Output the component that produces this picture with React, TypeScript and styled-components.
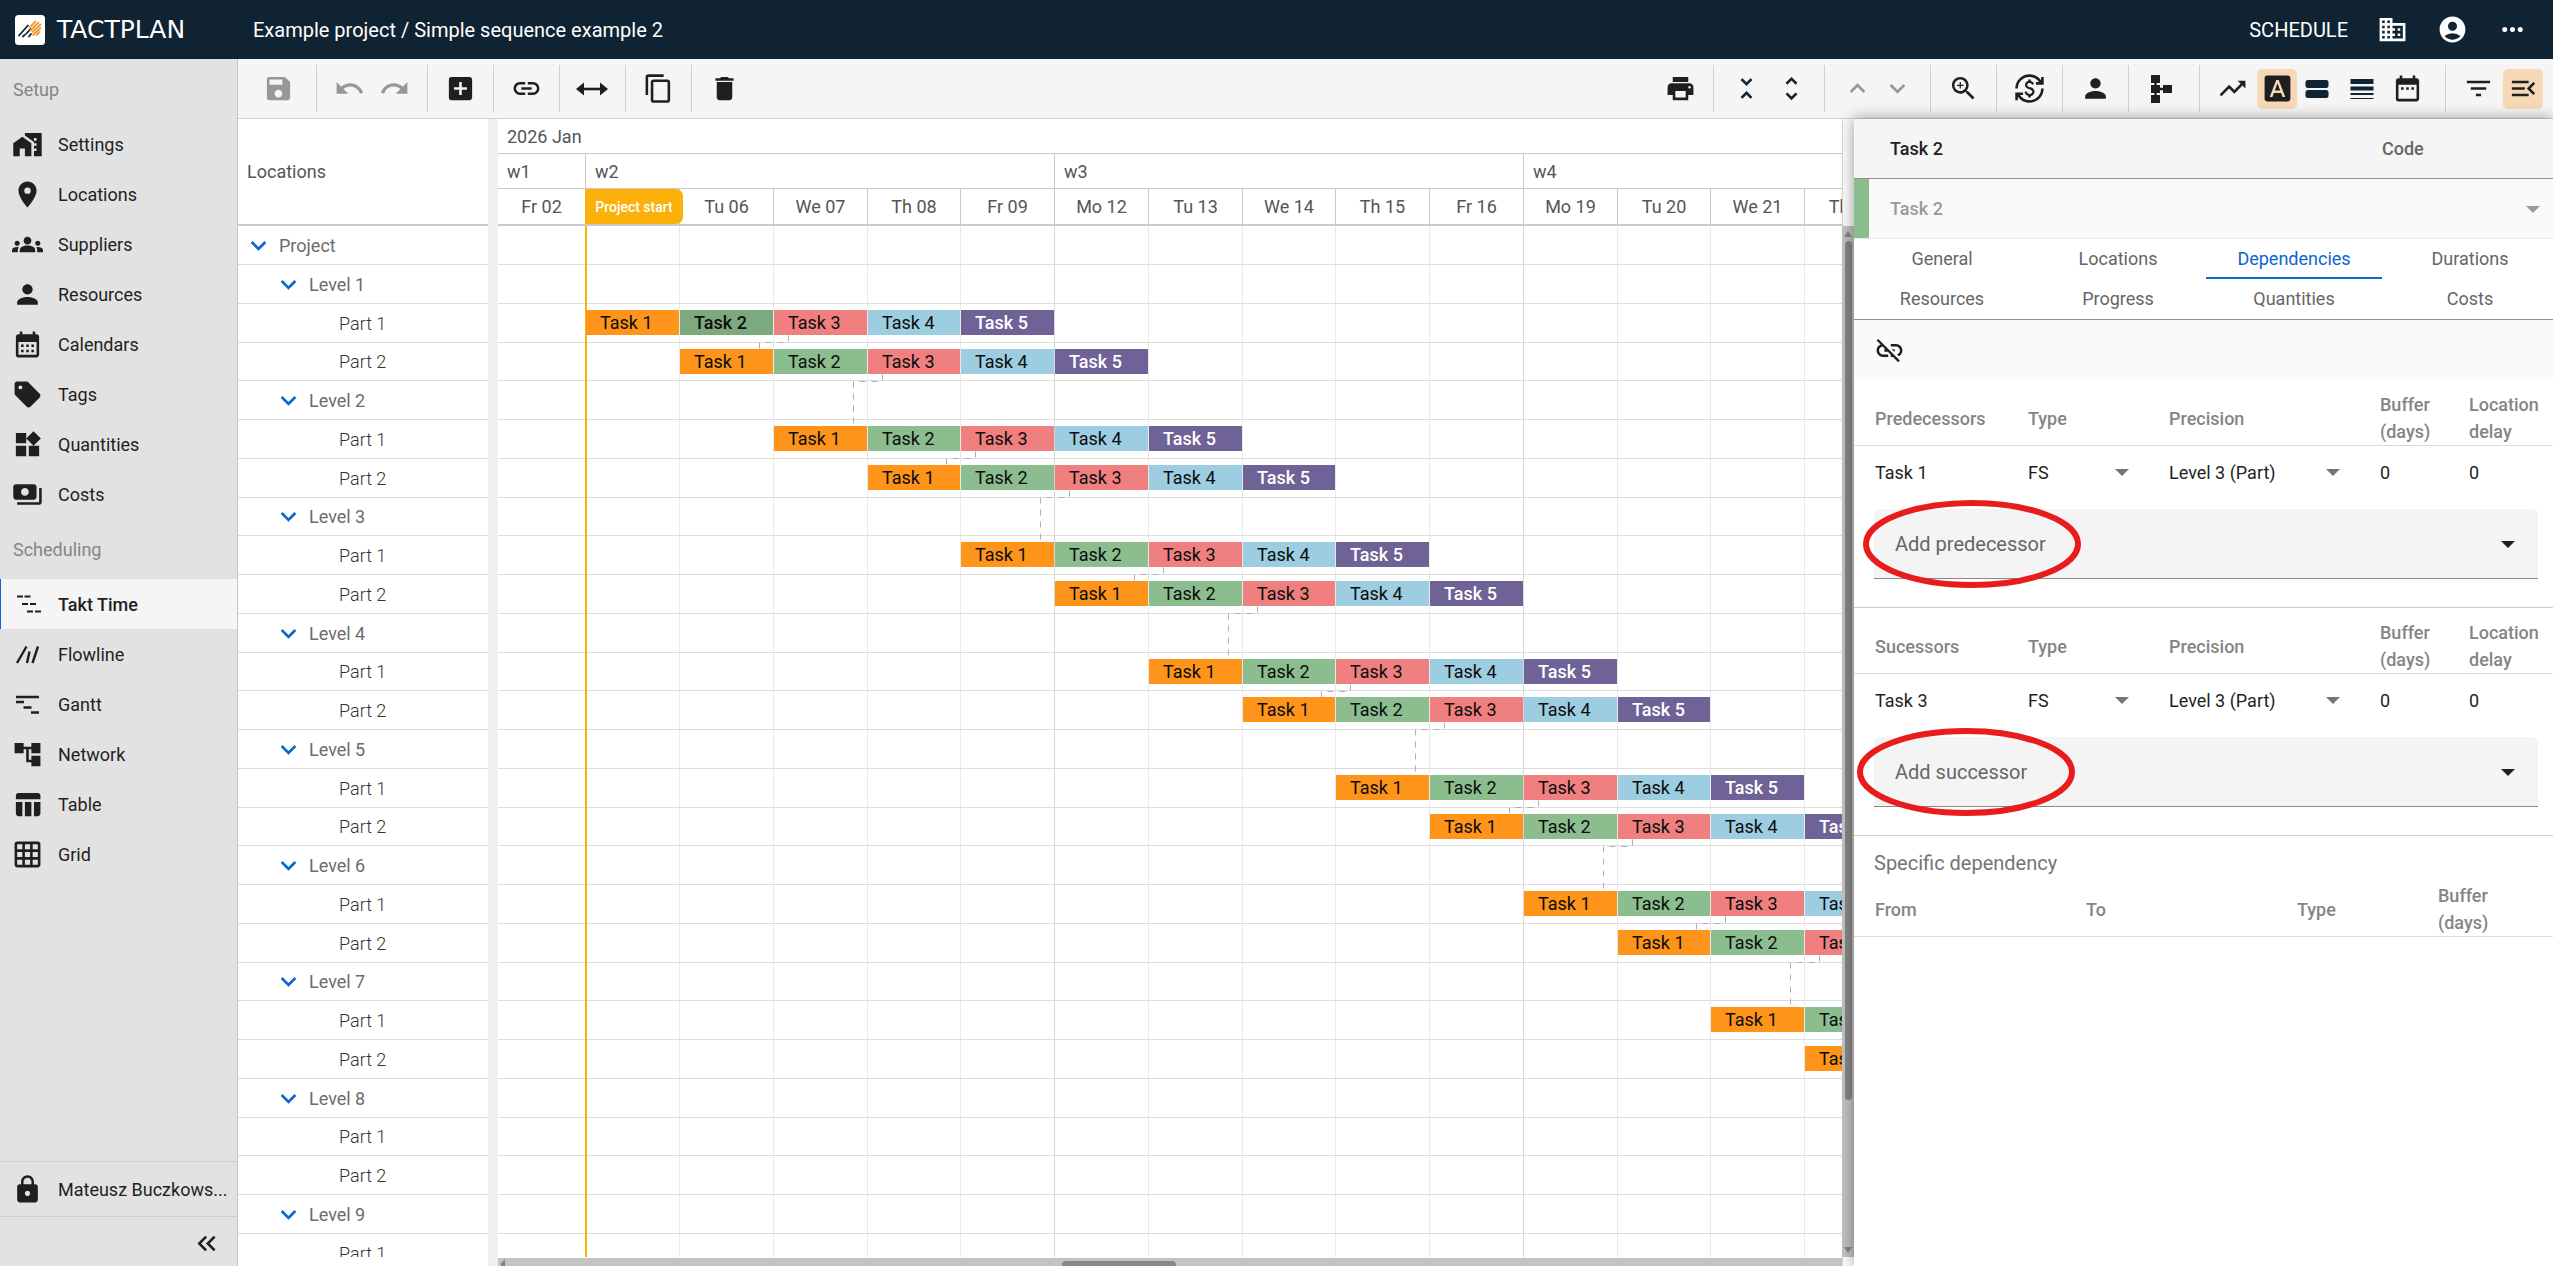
import React from "react";
import styled, { createGlobalStyle, css } from "styled-components";
import {
  MdAccountCircle,
  MdAccountTree,
  MdAddBox,
  MdBusiness,
  MdCalendarMonth,
  MdContentCopy,
  MdCurrencyExchange,
  MdDateRange,
  MdDelete,
  MdExpandLess,
  MdExpandMore,
  MdFilterList,
  MdFontDownload,
  MdGridOn,
  MdGroups,
  MdHomeWork,
  MdKeyboardDoubleArrowLeft,
  MdLink,
  MdLinkOff,
  MdLocationOn,
  MdLock,
  MdMenuOpen,
  MdMoreHoriz,
  MdPayments,
  MdPerson,
  MdPrint,
  MdRedo,
  MdSave,
  MdSell,
  MdTableChart,
  MdTrendingUp,
  MdUndo,
  MdUnfoldLess,
  MdUnfoldMore,
  MdWidgets,
  MdZoomIn,
} from "react-icons/md";

const color = {
  navy: "#0f2333",
  ink: "#1f1f1f",
  blue: "#0b66cf",
  amber: "#fbb00a",
  line: "#dcdcdc",
  headLine: "#c8c8c8",
  orange: "#fe941a",
  green: "#8bbd8f",
  greenDark: "#7da97f",
  red: "#f08080",
  sky: "#9dcde0",
  violet: "#6f6296",
};

const GlobalStyle = createGlobalStyle`
  *, *::before, *::after { box-sizing: border-box; }
  body {
    margin: 0;
    font-family: Roboto, "Liberation Sans", sans-serif;
    font-size: 18px;
    color: ${color.ink};
    background: #fff;
  }
  button, select, input { font: inherit; color: inherit; }
  button { border: 0; padding: 0; background: none; cursor: pointer; }
  a { color: inherit; text-decoration: none; }
`;

/* ---------- shell ---------- */

const Page = styled.div`
  display: grid;
  grid-template-columns: minmax(0, 1fr);
  grid-template-rows: 59px minmax(0, 1fr);
  height: 100vh;
  overflow: hidden;
`;

const TopBar = styled.header`
  display: flex;
  align-items: center;
  padding: 0 25px 0 15px;
  color: #fff;
  background: ${color.navy};
  font-size: 20px;
`;

const Brand = styled.a`
  display: flex;
  align-items: center;
  gap: 12px;
  width: 238px;
`;

const Wordmark = styled.span`
  font-family: "DejaVu Sans", sans-serif;
  font-size: 25px;
  line-height: 30px;
`;

const Crumb = styled.h1`
  flex: 1;
  margin: 0;
  font-size: 20px;
  font-weight: 400;
`;

const TopActions = styled.div`
  display: flex;
  align-items: center;
  gap: 29px;

  button { display: flex; align-items: center; }
`;

const Body = styled.div`
  display: flex;
  min-height: 0;
`;

const Sidebar = styled.nav`
  display: flex;
  flex-direction: column;
  flex: 0 0 238px;
  background: #e2e2e2;
  border-right: 1px solid #c6c6c6;
`;

const NavHeading = styled.div`
  display: flex;
  align-items: center;
  height: 60px;
  padding-left: 13px;
  color: #858585;
`;

const NavItem = styled.a<{ $active?: boolean }>`
  display: flex;
  align-items: center;
  gap: 15px;
  height: 50px;
  padding-left: 12px;
  ${(p) =>
    p.$active &&
    css`
      padding-left: 11px;
      border-left: 1px solid ${color.blue};
      background: #f5f5f5;
      font-weight: 500;
    `}
`;

const NavFooter = styled.div`
  margin-top: auto;
  border-top: 1px solid #cfcfcf;
`;

const UserRow = styled(NavItem)`
  height: 55px;
  border-bottom: 1px solid #cfcfcf;
  white-space: nowrap;
`;

const CollapseRow = styled.div`
  display: flex;
  justify-content: flex-end;
  align-items: center;
  height: 49px;
  padding: 4px 15px 0 0;

  button { display: flex; }
`;

const Main = styled.main`
  display: flex;
  flex-direction: column;
  flex: 1;
  min-width: 0;
`;

/* ---------- toolbar ---------- */

const Toolbar = styled.div`
  display: flex;
  align-items: center;
  flex: 0 0 60px;
  padding-left: 8px;
  padding-right: 10px;
  background: #f5f5f5;
  border-bottom: 1px solid #d0d0d0;
`;

const ToolGroup = styled.div<{ $wide?: boolean; $last?: boolean; $push?: boolean }>`
  display: flex;
  align-items: center;
  gap: 5px;
  height: 47px;
  padding-left: 12px;
  padding-right: ${(p) => (p.$last ? 0 : p.$wide ? 18 : 13)}px;
  border-right: ${(p) => (p.$last ? "0" : "1px solid #d0d0d0")};
  margin-left: ${(p) => (p.$push ? "auto" : "0")};
`;

const TightPair = styled.div`
  display: flex;
`;

const ToolButton = styled.button<{ $on?: boolean }>`
  display: flex;
  align-items: center;
  justify-content: center;
  width: 40px;
  height: 40px;
  border-radius: 5px;
  background: ${(p) => (p.$on ? "#f6d8b7" : "transparent")};

  &:disabled { color: #979797; }
`;

/* ---------- schedule ---------- */

const Workspace = styled.div`
  display: flex;
  flex: 1;
  min-height: 0;
`;

const LocationColumn = styled.section`
  flex: 0 0 250px;
  display: flex;
  flex-direction: column;
  padding-bottom: 9px;
  overflow: hidden;
`;

const LocationHead = styled.div`
  display: flex;
  align-items: center;
  flex: 0 0 107px;
  padding-left: 9px;
  color: #555;
  border-bottom: 2px solid #ccc;
`;

const RowList = styled.div`
  flex: 1;
  min-height: 0;
  overflow: hidden;
`;

const rowBox = css`
  height: 39px;
  border-bottom: 1px solid ${color.line};
  &:nth-child(4n) { height: 38px; }
`;

const LocationRow = styled.div<{ $depth: number }>`
  ${rowBox}
  display: flex;
  align-items: center;
  padding-left: ${(p) => [5, 35, 101][p.$depth]}px;
  color: ${(p) => (p.$depth === 2 ? "#333" : "#6c6c6c")};
  font-weight: ${(p) => (p.$depth === 2 ? 300 : 400)};

  button {
    display: flex;
    margin-right: 5px;
    color: ${color.blue};
  }
`;

const Splitter = styled.div`
  flex: 0 0 10px;
  background: #f0f0f0;
`;

const Timeline = styled.section`
  display: flex;
  flex-direction: column;
  flex: 1;
  min-width: 0;
  overflow: hidden;
  color: #555;
`;

const FIRST_DAY_WIDTH = 87;
const DAY_WIDTHS = [94, 94, 94, 93];
const dayWidth = (i: number) => (i === 0 ? FIRST_DAY_WIDTH : DAY_WIDTHS[(i - 1) % 4]);
const dayLeft = (i: number) => {
  let x = 0;
  for (let d = 0; d < i; d++) x += dayWidth(d);
  return x;
};
const rowTop = (i: number) => i * 39 - Math.floor(i / 4);

const days = [
  "Fr 02", "Mo 05", "Tu 06", "We 07", "Th 08", "Fr 09", "Mo 12", "Tu 13",
  "We 14", "Th 15", "Fr 16", "Mo 19", "Tu 20", "We 21", "Th 22",
];
const dayColumns = days.map((_, i) => `${dayWidth(i)}px`).join(" ");

const HeadRow = styled.div<{ $days?: boolean }>`
  display: grid;
  grid-template-columns: ${dayColumns};
  flex: 0 0 ${(p) => (p.$days ? 37 : 35)}px;
  border-bottom: ${(p) => (p.$days ? "2px solid #ccc" : `1px solid ${color.headLine}`)};
`;

const PeriodCell = styled.div<{ $from: number; $span: number }>`
  grid-column: ${(p) => p.$from} / span ${(p) => p.$span};
  display: flex;
  align-items: center;
  padding-left: 9px;
  border-left: ${(p) => (p.$from === 1 ? "0" : `1px solid ${color.headLine}`)};
`;

const DayHead = styled.div`
  display: flex;
  align-items: center;
  justify-content: center;
  min-width: 0;
  border-left: 1px solid ${color.headLine};

  &:first-child { border-left: 0; }
`;

const StartBadge = styled.div`
  display: flex;
  align-items: center;
  justify-content: center;
  z-index: 1;
  width: 98px;
  color: #fff;
  font-size: 14px;
  font-weight: 500;
  white-space: nowrap;
  background: ${color.amber};
  border-radius: 0 7px 7px 0;
`;

const Grid = styled.div`
  position: relative;
  flex: 1;
  min-height: 0;
  overflow: hidden;
`;

const GridRow = styled.div`
  ${rowBox}
  display: grid;
  grid-template-columns: ${dayColumns};
  grid-template-rows: 100%;
`;

const DayCell = styled.div<{ $col: number; $week?: boolean }>`
  grid-area: 1 / ${(p) => p.$col};
  border-left: 1px solid ${(p) => (p.$week ? "#d6d6d6" : "#e9e9e9")};

  &:first-child { border-left: 0; }
`;

const Overlay = styled.svg`
  position: absolute;
  inset: 0;
  z-index: 1;
  width: 100%;
  height: 100%;
  pointer-events: none;
`;

const Bar = styled.div<{ $col: number; $fill: string; $light?: boolean; $strong?: boolean }>`
  grid-area: 1 / ${(p) => p.$col};
  z-index: 2;
  height: 25px;
  margin: 6px 0 0 1px;
  padding-left: 14px;
  line-height: 25px;
  white-space: nowrap;
  color: ${(p) => (p.$light ? "#fff" : "#0c0c0c")};
  font-weight: ${(p) => (p.$light || p.$strong ? 500 : 400)};
  background: ${(p) => p.$fill};
`;

const HScroll = styled.div`
  display: grid;
  grid-template-columns: 12px 552fr 114fr 654fr 12px;
  align-items: end;
  flex: 0 0 8px;
  margin-top: 1px;
  background: #c3c3c3;

  svg { display: block; }
`;

const HThumb = styled.div`
  grid-column: 3;
  height: 5px;
  border-radius: 4px 4px 0 0;
  background: #888;
`;

const ScrollGutter = styled.div`
  display: grid;
  grid-template-rows: 107px minmax(0, 1fr) 9px;
  flex: 0 0 12px;
`;

const GutterCap = styled.div`
  background: #fbfbfb;
  border-left: 1px solid #d6d6d6;
`;

const VScroll = styled.div`
  display: grid;
  grid-template-rows: 15px 859fr 142fr 15px;
  justify-items: center;
  align-items: center;
  background: #c1c1c1;
`;

const VThumb = styled.div`
  width: 7px;
  height: 100%;
  border-radius: 4px;
  background: #858585;
`;

/* ---------- task panel ---------- */

const Panel = styled.aside`
  position: relative;
  z-index: 3;
  flex: 0 0 699px;
  min-width: 0;
  background: #fff;
  box-shadow: 0 0 14px rgba(0, 0, 0, 0.4);
  clip-path: inset(-14px 0 0 -14px);
`;

const PanelHead = styled.div`
  display: grid;
  grid-template-columns: 492px 1fr;
  align-items: center;
  height: 60px;
  padding-left: 36px;
  font-weight: 500;
  background: #f5f5f5;
  border-bottom: 1px solid #8f8f8f;

  span { color: #666; }
`;

const PickerRow = styled.div`
  display: flex;
  height: 60px;
  background: #fafafa;
  border-bottom: 1px solid #e6e6e6;
`;

const TaskSwatch = styled.div`
  width: 15px;
  background: ${color.green};
`;

const SelectBox = styled.div<{ $arrow: string; $inset?: number }>`
  position: relative;
  flex: 1;

  &::after {
    content: "";
    position: absolute;
    top: calc(50% - 3px);
    right: ${(p) => p.$inset ?? 0}px;
    border: 7px solid transparent;
    border-top-color: ${(p) => p.$arrow};
    border-bottom: 0;
    pointer-events: none;
  }

  select {
    display: block;
    width: 100%;
    height: 100%;
    padding: 0;
    border: 0;
    background: transparent;
    appearance: none;
    opacity: 1;
  }
`;

const TaskPicker = styled(SelectBox)`
  select {
    padding-left: 21px;
    color: #9a9a9a;
    font-weight: 500;
  }
`;

const CellPicker = styled(SelectBox)`
  height: 40px;
  margin-right: 40px;
`;

const AddPicker = styled(SelectBox)`
  height: 70px;
  margin: 11px 15px 28px 20px;
  color: #666;
  font-size: 20px;
  background: #f4f4f4;
  border-bottom: 1px solid #888;
  border-radius: 5px 5px 0 0;

  select { padding-left: 21px; }
`;

const Tabs = styled.div`
  display: grid;
  grid-template-columns: repeat(4, 176px);
  grid-auto-rows: 40px;
  height: 81px;
  overflow: hidden;
  border-bottom: 1px solid #8f8f8f;
`;

const Tab = styled.button<{ $active?: boolean }>`
  color: ${(p) => (p.$active ? color.blue : "#666")};
  border-bottom: 2px solid ${(p) => (p.$active ? color.blue : "transparent")};
`;

const LinkBar = styled.div`
  display: flex;
  align-items: center;
  height: 60px;
  padding-left: 20px;
  background: #fafafa;

  button { display: flex; }
`;

const LinkSection = styled.section`
  border-bottom: 1px solid #ccc;
`;

const DataTable = styled.table<{ $tight?: boolean }>`
  width: 100%;
  table-layout: fixed;
  border-collapse: separate;
  border-spacing: 0;

  th {
    height: ${(p) => (p.$tight ? 60 : 66)}px;
    padding: ${(p) => (p.$tight ? 5 : 11)}px 0 0;
    color: #858585;
    font-weight: 500;
    line-height: 27px;
    text-align: left;
    border-bottom: 1px solid #dcdcdc;
  }
  td {
    height: 52px;
    padding: 0;
  }
  th:first-child,
  td:first-child { padding-left: 21px; }
`;

const NumberInput = styled.input`
  display: block;
  width: 60px;
  padding: 0;
  border: 0;
  background: none;
`;

const SpecificTitle = styled.h2`
  margin: 0;
  padding: 14px 0 0 20px;
  color: #757575;
  font-size: 20px;
  font-weight: 400;
  line-height: 27px;
`;

const PickerWrap = styled.div`
  position: relative;
`;

const Ring = styled.svg<{ $left: number }>`
  position: absolute;
  top: -10px;
  left: ${(p) => p.$left}px;
  z-index: 1;
  pointer-events: none;
`;

/* ---------- drawings ---------- */

const ICON = 31;

const LogoMark = () => (
  <svg width="30" height="30" viewBox="0 0 30 30" aria-hidden="true">
    <rect width="30" height="30" rx="3.5" fill="#fff" />
    <g strokeWidth="1.800" strokeLinecap="round" fill="none">
      <path d="M4 20.500L13 10.500M8 21.500L9.500 20M11 19L15.500 14M14 21.500L16 19" stroke={color.navy} />
      <path d="M15 12L20.500 6.500M15.500 15.500L23.500 7.500M17.500 17L25.500 9.500M18 20L25.500 13M21.500 20L24.500 17" stroke="#f29a2e" />
    </g>
  </svg>
);

const TaktIcon = () => (
  <svg width={ICON} height={ICON} viewBox="0 0 31 31" aria-hidden="true">
    <path
      d="M5 7.500h6M12.500 7.500h6M10 15h6M18 15h6M15 22.500h6M23 22.500h6"
      stroke="currentColor"
      strokeWidth="2.200"
    />
  </svg>
);

const FlowlineIcon = () => (
  <svg width={ICON} height={ICON} viewBox="0 0 31 31" aria-hidden="true">
    <path d="M5 24L14.500 7.500M15 24L17.500 12.500M20.500 24L26 7.500" stroke="currentColor" strokeWidth="2.400" />
  </svg>
);

const GanttIcon = () => (
  <svg width={ICON} height={ICON} viewBox="0 0 31 31" aria-hidden="true">
    <path d="M4 8h23M4 13h8M11.500 18.500h8M19 23.500h8" stroke="currentColor" strokeWidth="2.400" />
  </svg>
);

const StretchIcon = () => (
  <svg width="32" height="16" viewBox="0 0 32 16" aria-hidden="true">
    <path d="M6 8h20" stroke="currentColor" strokeWidth="2.600" />
    <path d="M0 8L8 1.500V14.500zM32 8L24 1.500V14.500z" fill="currentColor" />
  </svg>
);

const HierarchyIcon = () => (
  <svg width="24" height="30" viewBox="0 0 24 30" aria-hidden="true">
    <path d="M6.500 4v22M6.500 15h10" stroke="currentColor" strokeWidth="2.400" />
    <path d="M2 1h9v8H2zM2 11h9v8H2zM2 21h9v8H2zM14 11h9v8H14z" fill="currentColor" />
  </svg>
);

const StackIcon = () => (
  <svg width="24" height="20" viewBox="0 0 24 20" fill={color.navy} aria-hidden="true">
    <rect x="0.500" y="1" width="23" height="8" rx="2.500" />
    <rect x="0.500" y="11" width="23" height="8" rx="2.500" />
  </svg>
);

const WeightsIcon = () => (
  <svg width="24" height="22" viewBox="0 0 24 22" fill={color.navy} aria-hidden="true">
    <path d="M0.500 1h23v5H0.500zM0.500 8.500h23v4H0.500zM0.500 15h23v2H0.500zM0.500 20h23v1H0.500z" />
  </svg>
);

const ScrollArrow = ({ d }: { d: string }) => (
  <svg width="8" height="8" viewBox="0 0 8 8" aria-hidden="true">
    <path d={d} fill="#858585" />
  </svg>
);

/* ---------- data ---------- */

const setupItems = [
  { label: "Settings", icon: <MdHomeWork size={ICON} /> },
  { label: "Locations", icon: <MdLocationOn size={ICON} /> },
  { label: "Suppliers", icon: <MdGroups size={ICON} /> },
  { label: "Resources", icon: <MdPerson size={ICON} /> },
  { label: "Calendars", icon: <MdCalendarMonth size={ICON} /> },
  { label: "Tags", icon: <MdSell size={ICON} /> },
  { label: "Quantities", icon: <MdWidgets size={ICON} /> },
  { label: "Costs", icon: <MdPayments size={ICON} /> },
];

const schedulingItems = [
  { label: "Takt Time", icon: <TaktIcon />, active: true },
  { label: "Flowline", icon: <FlowlineIcon /> },
  { label: "Gantt", icon: <GanttIcon /> },
  { label: "Network", icon: <MdAccountTree size={ICON} /> },
  { label: "Table", icon: <MdTableChart size={ICON} /> },
  { label: "Grid", icon: <MdGridOn size={ICON} /> },
];

type Row = { label: string; depth: number; start?: number };

const rows: Row[] = [{ label: "Project", depth: 0 }];
for (let level = 1; level <= 9; level++) {
  rows.push({ label: `Level ${level}`, depth: 1 });
  for (let part = 1; part <= (level === 9 ? 1 : 2); part++) {
    rows.push({ label: `Part ${part}`, depth: 2, start: (level - 1) * 2 + part });
  }
}

const taskFills = [color.orange, color.green, color.red, color.sky, color.violet];
const weekStarts = [1, 6, 11];
const tabs = [
  "General", "Locations", "Dependencies", "Durations",
  "Resources", "Progress", "Quantities", "Costs",
];

/* Dashed hand-over from one part's third task to the next part. */
const handovers = rows.flatMap((row, i) => {
  if (row.start === undefined) return [];
  const next = rows.findIndex((r, j) => j > i && r.start !== undefined);
  if (next < 0 || row.start + 2 >= days.length) return [];
  const x = dayLeft(row.start + 2) + 15;
  const y = rowTop(i);
  return [`M${x} ${y + 31}V${y + 38}H${x - 29}V${rowTop(next) + 6}`];
});

/* ---------- sections ---------- */

const Tool = ({
  label,
  on,
  disabled,
  children,
}: {
  label: string;
  on?: boolean;
  disabled?: boolean;
  children: React.ReactNode;
}) => (
  <ToolButton type="button" aria-label={label} $on={on} disabled={disabled}>
    {children}
  </ToolButton>
);

const MainToolbar = () => (
  <Toolbar>
    <ToolGroup $wide>
      <Tool label="Save" disabled><MdSave size={ICON} /></Tool>
    </ToolGroup>
    <ToolGroup>
      <Tool label="Undo" disabled><MdUndo size={ICON} /></Tool>
      <Tool label="Redo" disabled><MdRedo size={ICON} /></Tool>
    </ToolGroup>
    <ToolGroup><Tool label="Add"><MdAddBox size={ICON} /></Tool></ToolGroup>
    <ToolGroup><Tool label="Link"><MdLink size={ICON} /></Tool></ToolGroup>
    <ToolGroup><Tool label="Stretch"><StretchIcon /></Tool></ToolGroup>
    <ToolGroup><Tool label="Copy"><MdContentCopy size={ICON} /></Tool></ToolGroup>
    <ToolGroup $last><Tool label="Delete"><MdDelete size={ICON} /></Tool></ToolGroup>

    <ToolGroup $push><Tool label="Print"><MdPrint size={ICON} /></Tool></ToolGroup>
    <ToolGroup>
      <Tool label="Collapse all"><MdUnfoldLess size={ICON} color={color.navy} /></Tool>
      <Tool label="Expand all"><MdUnfoldMore size={ICON} color={color.navy} /></Tool>
    </ToolGroup>
    <ToolGroup>
      <TightPair>
        <Tool label="Move up" disabled><MdExpandLess size={ICON} /></Tool>
        <Tool label="Move down" disabled><MdExpandMore size={ICON} /></Tool>
      </TightPair>
    </ToolGroup>
    <ToolGroup><Tool label="Zoom"><MdZoomIn size={ICON} /></Tool></ToolGroup>
    <ToolGroup><Tool label="Currency"><MdCurrencyExchange size={ICON} /></Tool></ToolGroup>
    <ToolGroup><Tool label="Resources"><MdPerson size={ICON} /></Tool></ToolGroup>
    <ToolGroup $wide><Tool label="Hierarchy"><HierarchyIcon /></Tool></ToolGroup>
    <ToolGroup $wide>
      <Tool label="Trend"><MdTrendingUp size={ICON} /></Tool>
      <TightPair>
        <Tool label="Task names" on><MdFontDownload size={ICON} /></Tool>
        <Tool label="Stacked view"><StackIcon /></Tool>
      </TightPair>
      <Tool label="Row density"><WeightsIcon /></Tool>
      <Tool label="Date range"><MdDateRange size={ICON} /></Tool>
    </ToolGroup>
    <ToolGroup $last>
      <Tool label="Filter"><MdFilterList size={ICON} /></Tool>
      <Tool label="Toggle panel" on><MdMenuOpen size={ICON} /></Tool>
    </ToolGroup>
  </Toolbar>
);

const LocationTree = () => (
  <LocationColumn>
    <LocationHead>Locations</LocationHead>
    <RowList>
      {rows.map((row, i) => (
        <LocationRow key={i} $depth={row.depth}>
          {row.depth < 2 && (
            <button type="button" aria-label={`Toggle ${row.label}`}>
              <MdExpandMore size={ICON} />
            </button>
          )}
          {row.label}
        </LocationRow>
      ))}
    </RowList>
  </LocationColumn>
);

const TaktTimeline = () => (
  <Timeline>
    <HeadRow><PeriodCell $from={1} $span={15}>2026 Jan</PeriodCell></HeadRow>
    <HeadRow>
      <PeriodCell $from={1} $span={1}>w1</PeriodCell>
      <PeriodCell $from={2} $span={5}>w2</PeriodCell>
      <PeriodCell $from={7} $span={5}>w3</PeriodCell>
      <PeriodCell $from={12} $span={4}>w4</PeriodCell>
    </HeadRow>
    <HeadRow $days>
      {days.map((day, i) =>
        i === 1 ? <StartBadge key={day}>Project start</StartBadge> : <DayHead key={day}>{day}</DayHead>
      )}
    </HeadRow>
    <Grid>
      {rows.map((row, i) => (
        <GridRow key={i}>
          {days.map((day, d) => (
            <DayCell key={day} $col={d + 1} $week={weekStarts.includes(d)} />
          ))}
          {row.start !== undefined &&
            taskFills.map((fill, t) => {
              const day = row.start! + t;
              if (day >= days.length) return null;
              const selected = row.start === 1 && t === 1;
              return (
                <Bar
                  key={t}
                  $col={day + 1}
                  $fill={selected ? color.greenDark : fill}
                  $light={t === 4}
                  $strong={selected}
                >
                  Task {t + 1}
                </Bar>
              );
            })}
        </GridRow>
      ))}
      <Overlay aria-hidden="true">
        <rect x={FIRST_DAY_WIDTH} width="2" height="100%" fill={color.amber} />
        {handovers.map((d) => (
          <path key={d} d={d} transform="translate(0.5 0.5)" fill="none" stroke="#b0b0b0" strokeDasharray="6 6" />
        ))}
      </Overlay>
    </Grid>
    <HScroll>
      <ScrollArrow d="M7 1V8H3V5z" />
      <HThumb />
    </HScroll>
  </Timeline>
);

const LinkTable = ({ title, task, addLabel, ring }: { title: string; task: string; addLabel: string; ring: number }) => (
  <LinkSection>
    <DataTable>
      <colgroup>
        <col style={{ width: 174 }} />
        <col style={{ width: 141 }} />
        <col style={{ width: 211 }} />
        <col style={{ width: 89 }} />
        <col />
      </colgroup>
      <thead>
        <tr>
          <th>{title}</th>
          <th>Type</th>
          <th>Precision</th>
          <th>Buffer<br />(days)</th>
          <th>Location<br />delay</th>
        </tr>
      </thead>
      <tbody>
        <tr>
          <td>{task}</td>
          <td>
            <CellPicker $arrow="#757575">
              <select aria-label={`${title} type`}><option>FS</option></select>
            </CellPicker>
          </td>
          <td>
            <CellPicker $arrow="#757575">
              <select aria-label={`${title} precision`}><option>Level 3 (Part)</option></select>
            </CellPicker>
          </td>
          <td><NumberInput aria-label={`${title} buffer in days`} defaultValue="0" /></td>
          <td><NumberInput aria-label={`${title} location delay`} defaultValue="0" /></td>
        </tr>
      </tbody>
    </DataTable>
    <PickerWrap>
      <AddPicker $arrow={color.ink} $inset={23}>
        <select aria-label={addLabel}><option>{addLabel}</option></select>
      </AddPicker>
      <Ring $left={ring} width="222" height="90" viewBox="0 0 222 90" aria-hidden="true">
        <ellipse cx="111" cy="45" rx="106" ry="41" fill="none" stroke="#e81c1c" strokeWidth="6" />
      </Ring>
    </PickerWrap>
  </LinkSection>
);

const TaskPanel = () => (
  <Panel>
    <PanelHead>
      Task 2 <span>Code</span>
    </PanelHead>
    <PickerRow>
      <TaskSwatch />
      <TaskPicker $arrow="#9a9a9a" $inset={13}>
        <select aria-label="Task" disabled><option>Task 2</option></select>
      </TaskPicker>
    </PickerRow>
    <Tabs role="tablist">
      {tabs.map((tab) => (
        <Tab key={tab} type="button" role="tab" aria-selected={tab === "Dependencies"} $active={tab === "Dependencies"}>
          {tab}
        </Tab>
      ))}
    </Tabs>
    <LinkBar>
      <button type="button" aria-label="Remove links"><MdLinkOff size={ICON} /></button>
    </LinkBar>
    <LinkTable title="Predecessors" task="Task 1" addLabel="Add predecessor" ring={7} />
    <LinkTable title="Sucessors" task="Task 3" addLabel="Add successor" ring={1} />
    <section>
      <SpecificTitle>Specific dependency</SpecificTitle>
      <DataTable $tight>
        <colgroup>
          <col style={{ width: 232 }} />
          <col style={{ width: 211 }} />
          <col style={{ width: 141 }} />
          <col />
        </colgroup>
        <thead>
          <tr>
            <th>From</th>
            <th>To</th>
            <th>Type</th>
            <th>Buffer<br />(days)</th>
          </tr>
        </thead>
      </DataTable>
    </section>
  </Panel>
);

export default function App() {
  return (
    <>
      <GlobalStyle />
      <Page>
        <TopBar>
          <Brand href="#home">
            <LogoMark />
            <Wordmark>TACTPLAN</Wordmark>
          </Brand>
          <Crumb>Example project / Simple sequence example 2</Crumb>
          <TopActions>
            <a href="#schedule">SCHEDULE</a>
            <button type="button" aria-label="Company"><MdBusiness size={ICON} /></button>
            <button type="button" aria-label="Account"><MdAccountCircle size={ICON} /></button>
            <button type="button" aria-label="More"><MdMoreHoriz size={ICON} /></button>
          </TopActions>
        </TopBar>
        <Body>
          <Sidebar>
            <NavHeading>Setup</NavHeading>
            {setupItems.map((item) => (
              <NavItem key={item.label} href={`#${item.label}`}>
                {item.icon}
                {item.label}
              </NavItem>
            ))}
            <NavHeading>Scheduling</NavHeading>
            {schedulingItems.map((item) => (
              <NavItem key={item.label} href={`#${item.label}`} $active={item.active}>
                {item.icon}
                {item.label}
              </NavItem>
            ))}
            <NavFooter>
              <UserRow href="#account">
                <MdLock size={ICON} />
                Mateusz Buczkows...
              </UserRow>
              <CollapseRow>
                <button type="button" aria-label="Collapse menu"><MdKeyboardDoubleArrowLeft size={ICON} /></button>
              </CollapseRow>
            </NavFooter>
          </Sidebar>
          <Main>
            <MainToolbar />
            <Workspace>
              <LocationTree />
              <Splitter />
              <TaktTimeline />
              <ScrollGutter>
                <GutterCap />
                <VScroll>
                  <ScrollArrow d="M4 1L8 7H0z" />
                  <VThumb />
                  <span />
                  <ScrollArrow d="M0 1H8L4 7z" />
                </VScroll>
                <GutterCap />
              </ScrollGutter>
              <TaskPanel />
            </Workspace>
          </Main>
        </Body>
      </Page>
    </>
  );
}
